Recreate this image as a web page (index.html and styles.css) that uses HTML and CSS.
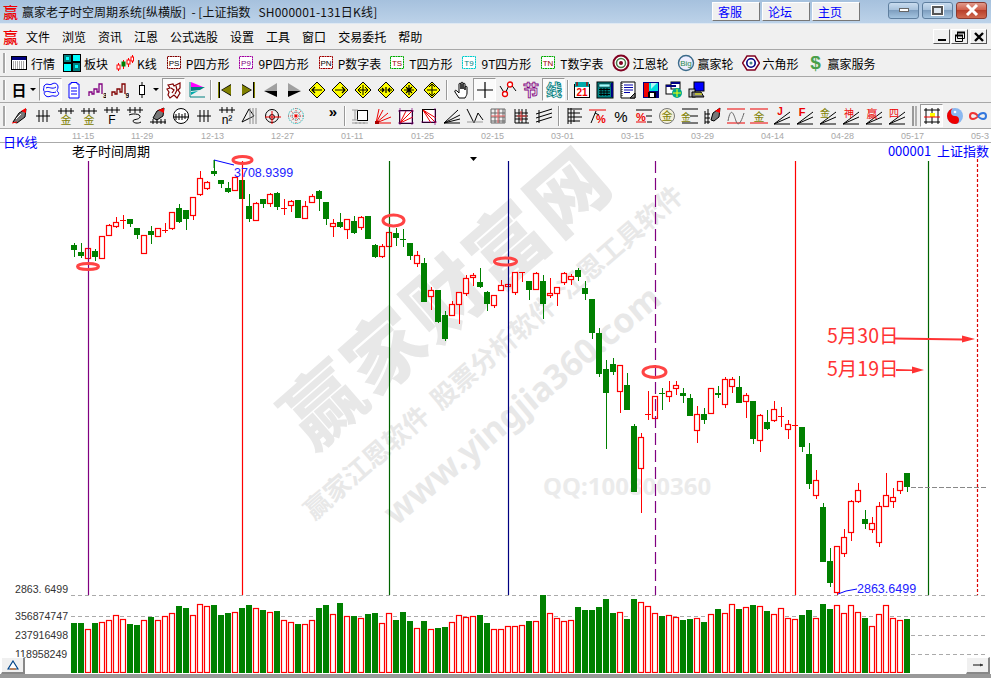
FILE: index.html
```html
<!DOCTYPE html>
<html lang="zh">
<head>
<meta charset="utf-8">
<title>赢家老子时空周期系统</title>
<link rel="stylesheet" href="styles.css">
</head>
<body>
<svg class="defs" aria-hidden="true">
  <symbol id="hq" viewBox="0 0 18 18"><rect x="1.5" y="2.5" width="15" height="13" fill="#fff" stroke="#000"/><rect x="2" y="3" width="14" height="3" fill="#000080"/><path d="M3 8h12M3 10h12M3 12h12M3 14h12" stroke="#555" stroke-dasharray="1 1"/></symbol>
  <symbol id="bk" viewBox="0 0 18 18"><rect x="0.5" y="0.5" width="8" height="8" fill="#008080" stroke="#000"/><rect x="9.5" y="0.5" width="8" height="7" fill="#0ff" stroke="#000"/><rect x="0.5" y="9.5" width="8" height="8" fill="#0ff" stroke="#000"/><rect x="9.5" y="8.5" width="8" height="9" fill="#008080" stroke="#000"/><path d="M3 3h3v3H3zM12 11h3v3h-3z" fill="#0ff"/></symbol>
  <symbol id="kx" viewBox="0 0 18 18"><path d="M2.5 9v8M7.5 6v9M12.5 4v9M16.5 1v8" stroke="#f00"/><rect x="1" y="11" width="3" height="4" fill="#fff" stroke="#f00"/><rect x="6" y="8" width="3" height="4" fill="#008000" stroke="#008000"/><rect x="11" y="6" width="3" height="4" fill="#fff" stroke="#f00"/><rect x="15" y="3" width="2.5" height="4" fill="#fff" stroke="#f00"/></symbol>
  <symbol id="jl" viewBox="0 0 18 18"><circle cx="9" cy="9" r="7.5" fill="#fff" stroke="#800020" stroke-width="2"/><circle cx="9" cy="9" r="4.5" fill="none" stroke="#4a7a4a" stroke-width="1.5"/><circle cx="9" cy="9" r="2" fill="#800020"/></symbol>
  <symbol id="yj" viewBox="0 0 18 18"><circle cx="9" cy="9" r="7.5" fill="#eef" stroke="#3a6a8a" stroke-width="1.4"/><text class="it" x="9" y="12" font-size="8" text-anchor="middle" fill="#2a8a4a">Big</text></symbol>
  <symbol id="hex" viewBox="0 0 18 18"><path d="M5 2h8l4.5 7-4.5 7H5L.5 9z" fill="#fff" stroke="#800020" stroke-width="1.5"/><circle cx="9" cy="9" r="4.2" fill="none" stroke="#000080" stroke-width="1.6"/><circle cx="9" cy="9" r="1.5" fill="#4a8a8a"/></symbol>
  <symbol id="wave" viewBox="0 0 18 18"><path d="M2 5C5 1 7 5 10 3s6 0 6 3-2 3 0 5-1 5-4 4-5 2-8 0-1-4-2-5 0-3 0-5zM4 7c3-2 6 2 10-1M3 11c4-2 6 2 11 0" fill="none" stroke="#00f"/></symbol>
  <symbol id="clip" viewBox="0 0 18 18"><path d="M4 3h2V1.5h6V3h2v14H4zM6 7h6M6 10h6M6 13h6" fill="#fff" stroke="#00f"/></symbol>
  <symbol id="st3" viewBox="0 0 18 18"><path d="M1 15v-4h3v2h2V8h3v3h2V3h3v10" fill="none" stroke="#800080" stroke-width="1.3"/><text class="it" x="15" y="17" font-size="7" fill="#000" font-weight="700">3</text></symbol>
  <symbol id="st9" viewBox="0 0 18 18"><path d="M1 15v-4h3v2h2V8h3v3h2V3h3v10" fill="none" stroke="#800000" stroke-width="1.3"/><text class="it" x="14.5" y="17" font-size="7" fill="#000" font-weight="700">9</text></symbol>
  <symbol id="can" viewBox="0 0 18 18"><path d="M9 1v16" stroke="#000"/><rect x="6.5" y="4.5" width="5" height="9" fill="#fff" stroke="#000"/></symbol>
  <symbol id="mz" viewBox="0 0 18 18"><path d="M3 4l5-1 1 2 6-3v5l-2 2 2 3-3 5-3-3-4 3-2-3 1-3-2-3 3-1zM6 7l3 2-2 3M11 5l1 4-2 4" fill="none" stroke="#800000" stroke-width="1.2"/></symbol>
  <symbol id="flag" viewBox="0 0 18 18"><path d="M2 1v15h15" fill="none" stroke="#008080"/><path d="M3 1v6l12-1z" fill="#f0f"/><path d="M3 6h14l-5 3-9 1z" fill="#008080"/><path d="M3 11l7-1-7 4z" fill="#0aa"/></symbol>
  <symbol id="first" viewBox="0 0 18 18"><path d="M2 1v16h2V1zM15 3v12L5 9z" fill="#000"/><path d="M15 4v10L6 9z" fill="#808000"/><path d="M2.5 1v16" stroke="#808000"/></symbol>
  <symbol id="last" viewBox="0 0 18 18"><path d="M14 1v16h2V1zM3 3v12l10-6z" fill="#000"/><path d="M3 4v10l9-5z" fill="#808000"/><path d="M15.5 1v16" stroke="#808000"/></symbol>
  <symbol id="lt" viewBox="0 0 18 18"><path d="M15 2L2 10h13z" fill="#a0a0a0"/><path d="M2 10l13 6V10z" fill="#000"/></symbol>
  <symbol id="rt" viewBox="0 0 18 18"><path d="M3 2l13 8H3z" fill="#a0a0a0"/><path d="M16 10L3 16V10z" fill="#000"/></symbol>
  <symbol id="dl" viewBox="0 0 18 18"><path d="M9 1l8 8-8 8-8-8z" fill="#ff0" stroke="#000"/><path d="M4 9h10M7 6L4 9l3 3" fill="none" stroke="#000" stroke-width="1.2"/></symbol>
  <symbol id="dr" viewBox="0 0 18 18"><path d="M9 1l8 8-8 8-8-8z" fill="#ff0" stroke="#000"/><path d="M4 9h10M11 6l3 3-3 3" fill="none" stroke="#000" stroke-width="1.2"/></symbol>
  <symbol id="dh" viewBox="0 0 18 18"><path d="M9 1l8 8-8 8-8-8z" fill="#ff0" stroke="#000"/><path d="M4 9h10M7 6L4 9l3 3M11 6l3 3-3 3M9 4v10" fill="none" stroke="#000"/></symbol>
  <symbol id="dx" viewBox="0 0 18 18"><path d="M9 1l8 8-8 8-8-8z" fill="#ff0" stroke="#000"/><path d="M3 9h4M15 9h-4M5 7l2 2-2 2M13 7l-2 2 2 2M9 6v6" fill="none" stroke="#000" stroke-width="1.2"/></symbol>
  <symbol id="da" viewBox="0 0 18 18"><path d="M9 1l8 8-8 8-8-8z" fill="#ff0" stroke="#000"/><path d="M4 9h10M9 4v10M6 6l6 6M12 6l-6 6" fill="none" stroke="#000" stroke-width="1.2"/></symbol>
  <symbol id="dv" viewBox="0 0 18 18"><path d="M9 1l8 8-8 8-8-8z" fill="#ff0" stroke="#000"/><path d="M9 3v12M6 6l3-3 3 3M6 12l3 3 3-3M4 9h10" fill="none" stroke="#000"/></symbol>
  <symbol id="hand" viewBox="0 0 18 18"><path d="M6 17l-4-6c-1-2 1-2 2-1l2 2V3c0-1 2-1 2 0v5V2c0-1 2-1 2 0v6V3c0-1 2-1 2 0v6V6c0-1 2-1 2 0v6c0 2-1 3-2 5z" fill="#fff" stroke="#000"/></symbol>
  <symbol id="cross" viewBox="0 0 18 18"><path d="M9 1v16M1 9h16" stroke="#000" stroke-width="1.2"/></symbol>
  <symbol id="zig" viewBox="0 0 18 18"><path d="M1 5l5 8 5-11 6 8" fill="none" stroke="#000"/><circle cx="6" cy="13" r="2.5" fill="#fff" stroke="#e00" stroke-width="1.3"/><circle cx="11" cy="3.5" r="2.5" fill="#fff" stroke="#e00" stroke-width="1.3"/></symbol>
  <symbol id="jie" viewBox="0 0 18 18"><text class="it" x="9" y="15" font-size="16" font-weight="700" text-anchor="middle" fill="none" stroke="#800080" stroke-width=".8">节</text></symbol>
  <symbol id="xian" viewBox="0 0 18 18"><text class="it" x="9" y="15" font-size="16" font-weight="700" text-anchor="middle" fill="none" stroke="#008080" stroke-width=".8">线</text></symbol>
  <symbol id="cal" viewBox="0 0 18 18"><rect x="1.5" y="3.5" width="15" height="13" fill="#fff" stroke="#000"/><path d="M2 1h14v5H2z" fill="#0aa"/><path d="M4 1v4M14 1v4" stroke="#a00" stroke-width="1.4"/><text class="it" x="9" y="15" font-size="10" font-weight="700" text-anchor="middle" fill="#e00">21</text></symbol>
  <symbol id="calc" viewBox="0 0 18 18"><rect x="1" y="1" width="16" height="16" fill="#008080" stroke="#000"/><rect x="3" y="3" width="11" height="3" fill="#9ff" stroke="#000" stroke-width=".5"/><path d="M3 8.5h11M3 11h11M3 13.5h11M5 7v8M8 7v8M11 7v8" stroke="#000"/><path d="M16 2v14" stroke="#000080" stroke-width="2"/></symbol>
  <symbol id="note" viewBox="0 0 18 18"><path d="M2 1h14v16H2z" fill="#fff" stroke="#000"/><path d="M5 4h9M5 6.5h9M5 9h9M5 11.5h6" stroke="#00a"/><path d="M11 17l5-5v5z" fill="#888" stroke="#000"/><path d="M3 2v14" stroke="#000" stroke-dasharray="1 1"/></symbol>
  <symbol id="disk" viewBox="0 0 18 18"><rect x="1" y="1" width="16" height="16" fill="#000080"/><rect x="2" y="2" width="5" height="14" fill="#e00"/><rect x="7" y="2" width="9" height="8" fill="#0dd"/><path d="M9 2h6l-6 6z" fill="#fff" opacity=".7"/><rect x="6" y="11" width="8" height="6" fill="#000"/><rect x="8" y="12" width="4" height="4" fill="#fff"/></symbol>
  <symbol id="win" viewBox="0 0 18 18"><rect x="1" y="4" width="10" height="9" fill="#fff" stroke="#000"/><rect x="6" y="1" width="9" height="7" fill="#fff" stroke="#000"/><rect x="6" y="1" width="9" height="2" fill="#000080"/><rect x="1" y="4" width="10" height="2" fill="#000080"/><circle cx="12" cy="12" r="5" fill="#0a8"/><path d="M8 12h8M12 8v8" stroke="#ff0"/></symbol>
  <symbol id="pc" viewBox="0 0 18 18"><rect x="6" y="1" width="10" height="9" fill="#00f" stroke="#000"/><rect x="1" y="8" width="6" height="8" fill="#ccc" stroke="#000"/><path d="M4 11h9l3 5H4z" fill="#777" stroke="#000"/><path d="M7 13h7" stroke="#ff0"/></symbol>
  <symbol id="pen" viewBox="0 0 18 18"><path d="M2 15L8 6l7-4-1 8-8 6z" fill="#777" stroke="#000"/><path d="M10 4l5-3v5z" fill="#f00"/><path d="M1 16l5-1" stroke="#f00"/><path d="M5 12L10 7" stroke="#fff"/></symbol>
  <symbol id="tal" viewBox="0 0 18 18"><path d="M2 9h14M5 3v12M9 3v12M13 3v12" stroke="#000"/></symbol>
  <symbol id="tj" viewBox="0 0 18 18"><path d="M1 4h16M4 1v6M9 1v6M14 1v6" stroke="#000"/><text class="it" x="9" y="17" font-size="11" text-anchor="middle" fill="#808000">金</text></symbol>
  <symbol id="tf" viewBox="0 0 18 18"><path d="M1 3h16M4 0v6M9 0v6M14 0v6" stroke="#000"/><text class="it" x="9" y="17" font-size="12" text-anchor="middle" fill="#000">F</text></symbol>
  <symbol id="ts" viewBox="0 0 18 18"><path d="M1 3h16M4 0v6M9 0v6M14 0v6" stroke="#000"/><path d="M3 8c4-2 12-1 11 2s-7 2-7 4 5 3 8 1" fill="none" stroke="#000"/></symbol>
  <symbol id="pn2" viewBox="0 0 18 18"><path d="M4 11l4-7 7-3-1 8-6 4z" fill="#777" stroke="#000"/><path d="M9 3l6-2v5z" fill="#f00"/><path d="M1 15h16M4 12v5M8 12v5M12 12v5M16 12v5" stroke="#000"/></symbol>
  <symbol id="cir" viewBox="0 0 18 18"><circle cx="9" cy="9" r="7.5" fill="#fff" stroke="#000"/><path d="M1 10h16M4 7v6M7 6v7M10 7v6M13 6v6" stroke="#000"/></symbol>
  <symbol id="tn" viewBox="0 0 18 18"><path d="M1 3h16M4 0v6M9 0v6M14 0v6" stroke="#000"/><text class="it" x="9" y="17" font-size="12" text-anchor="middle" fill="#000">n²</text></symbol>
  <symbol id="gt" viewBox="0 0 18 18"><path d="M1 15L8 2l5 7z" fill="none" stroke="#000"/><path d="M9 1v16M12 1v16M15 1v16" stroke="#888"/></symbol>
  <symbol id="tgt" viewBox="0 0 18 18"><circle cx="8" cy="9" r="6.5" fill="none" stroke="#000"/><circle cx="8" cy="10" r="2.5" fill="none" stroke="#000"/><path d="M1 10h16M8 4v13" stroke="#e00"/></symbol>
  <symbol id="rad" viewBox="0 0 18 18"><circle cx="9" cy="9" r="7.5" fill="none" stroke="#0aa" stroke-dasharray="1 1"/><circle cx="9" cy="9" r="4" fill="none" stroke="#088" stroke-dasharray="1 1"/><path d="M1 9h16M9 1v16M4 4l10 10M14 4L4 14" stroke="#e44" stroke-dasharray="1 1"/><circle cx="9" cy="9" r="1.5" fill="#e00"/></symbol>
  <symbol id="rb" viewBox="0 0 18 18"><rect x="6.5" y="3.5" width="10" height="10" fill="#fff" stroke="#000"/><path d="M1 3h6M1 13h6M4 3v10M1 16h16M5 15v2M9 15v2M13 15v2" stroke="#999"/></symbol>
  <symbol id="fr" viewBox="0 0 18 18"><path d="M2 16L5 2M2 16L9 3M2 16L14 6M2 16L17 10M2 16h15" stroke="#e00"/><path d="M1 14h4v3H1z" fill="#a00"/></symbol>
  <symbol id="bf1" viewBox="0 0 18 18"><rect x="2.5" y="3.5" width="13" height="13" fill="#fff" stroke="#000"/><path d="M3 16L16 3M3 16L9 4M3 16L16 10" stroke="#e00"/><path d="M3 1v17M1 16h16M15 1v17M1 4h16" stroke="#800080" stroke-width=".7"/></symbol>
  <symbol id="bf2" viewBox="0 0 18 18"><rect x="2.5" y="2.5" width="13" height="13" fill="#fff" stroke="#000"/><path d="M3 3l13 13M3 3l8 13M3 3l13 8" stroke="#e00"/><path d="M1 15h16M15 1v17" stroke="#800080" stroke-width=".7"/></symbol>
  <symbol id="fb" viewBox="0 0 18 18"><path d="M1 16L15 3M1 16L17 8M1 16l16-4M1 16h16" stroke="#000"/></symbol>
  <symbol id="vv" viewBox="0 0 18 18"><path d="M1 2l7 14 4-10 5 7" fill="none" stroke="#000"/><path d="M1 15h16" stroke="#999"/></symbol>
  <symbol id="grd" viewBox="0 0 18 18"><path d="M2 2h14v14H2zM2 6h14M2 10h14M2 14h14M6 2v14M10 2v14M14 2v14" fill="none" stroke="#666"/><path d="M2 9h14M9 2v14" stroke="#e66"/></symbol>
  <symbol id="grb" viewBox="0 0 18 18"><path d="M3 2v14h14M3 6h13M3 9h13M3 12h13M7 2v14M10 2v14M14 2v14" fill="none" stroke="#000"/><path d="M5 9h10M9 4v10" stroke="#e44"/></symbol>
  <symbol id="par" viewBox="0 0 18 18"><path d="M1 7l16-5M1 11l16-5M1 15l16-5M4 3v13" stroke="#000"/></symbol>
  <symbol id="tb1" viewBox="0 0 18 18"><path d="M2 1v16M2 2h14M2 6h12M2 10h14M2 14h12M5 1v16M8 3v12" stroke="#000"/></symbol>
  <symbol id="pc1" viewBox="0 0 18 18"><path d="M0 3h17" stroke="#e00"/><path d="M2 16L7 4M6 6l4 2" stroke="#000"/><text class="it" x="12" y="16" font-size="11" font-weight="700" text-anchor="middle" fill="#e00">%</text></symbol>
  <symbol id="pc2" viewBox="0 0 18 18"><text class="it" x="9" y="15" font-size="15" text-anchor="middle" fill="#000">%</text></symbol>
  <symbol id="pc3" viewBox="0 0 18 18"><path d="M1 3h16M11 9h6M12 15h5" stroke="#000"/><path d="M1 15h10" stroke="#e00"/><text class="it" x="6" y="14" font-size="11" font-weight="700" text-anchor="middle" fill="#e00">%</text></symbol>
  <symbol id="cg" viewBox="0 0 18 18"><circle cx="9" cy="9" r="7.5" fill="#f4f0d8" stroke="#777"/><text class="it" x="9" y="13" font-size="11" text-anchor="middle" fill="#808000">金</text></symbol>
  <symbol id="lg" viewBox="0 0 18 18"><path d="M1 2h16M9 9h8M1 16h16" stroke="#000"/><text class="it" x="5" y="14" font-size="10" text-anchor="middle" fill="#808000">金</text></symbol>
  <symbol id="pn3" viewBox="0 0 18 18"><path d="M7 13l2-7 7-5-1 9-5 4z" fill="#777" stroke="#000"/><path d="M11 4l5-3v5z" fill="#f00"/><path d="M1 4v13M4 2v15M1 7h5M1 11h5M1 15h5" stroke="#000"/></symbol>
  <symbol id="sin" viewBox="0 0 18 18"><path d="M0 2h18M0 16h18" stroke="#e00"/><path d="M1 14c3-16 6-6 8 0s5 2 8-8" fill="none" stroke="#666"/></symbol>
  <symbol id="lgr" viewBox="0 0 18 18"><path d="M0 2h18M0 16h18" stroke="#e00"/><text class="it" x="9" y="14" font-size="11" text-anchor="middle" fill="#808000">金</text></symbol>
  <symbol id="fj" viewBox="0 0 18 18"><path d="M1 17L17 5M1 17l16-7M1 17h16" stroke="#000"/><text class="it" x="7" y="8" font-size="10" font-weight="700" text-anchor="middle" fill="#e00">J</text></symbol>
  <symbol id="ff" viewBox="0 0 18 18"><path d="M1 17L17 5M1 17l16-7M1 17h16" stroke="#000"/><text class="it" x="6" y="9" font-size="11" font-weight="700" text-anchor="middle" fill="#e00">F</text></symbol>
  <symbol id="fg" viewBox="0 0 18 18"><path d="M1 17L17 5M1 17l16-7M1 17h16" stroke="#000"/><text class="it" x="6" y="10" font-size="10" text-anchor="middle" fill="#808000">金</text></symbol>
  <symbol id="fs" viewBox="0 0 18 18"><path d="M1 17L17 5M1 17l16-7M1 17h16" stroke="#000"/><text class="it" x="7" y="10" font-size="10" text-anchor="middle" fill="#e00">神</text></symbol>
  <symbol id="fy" viewBox="0 0 18 18"><path d="M1 17L17 5M1 17l16-7M1 17h16" stroke="#000"/><text class="it" x="7" y="11" font-size="11" text-anchor="middle" fill="#e00">赢</text></symbol>
  <symbol id="f4" viewBox="0 0 18 18"><path d="M1 17L17 5M1 17l16-7M1 17h16" stroke="#000"/><text class="it" x="6" y="10" font-size="10" text-anchor="middle" fill="#e00">四</text></symbol>
  <symbol id="gy" viewBox="0 0 18 18"><path d="M3 1v16M9 1v16M15 1v16M1 3h16M1 15h16" stroke="#000"/><rect x="7" y="6" width="5" height="4" fill="#ff0"/><path d="M1 10h16" stroke="#e00"/></symbol>
  <symbol id="yy" viewBox="0 0 18 18"><circle cx="9" cy="9" r="8" fill="#8ab8f0"/><path d="M9 1a8 8 0 0 0 0 16 4 4 0 0 0 0-8 4 4 0 0 1 0-8z" fill="#e00"/><circle cx="9" cy="5" r="1.3" fill="#fff"/><circle cx="9" cy="13" r="1.3" fill="#e00"/></symbol>
  <symbol id="inf" viewBox="0 0 18 18"><path d="M9 9C6 5 1 5 1 9s5 4 8 0" fill="none" stroke="#e33" stroke-width="2"/><path d="M9 9c3-4 8-4 8 0s-5 4-8 0" fill="none" stroke="#37d" stroke-width="2"/></symbol>
</svg>

<header class="titlebar">
  <span class="logo">赢</span>
  <span class="title">赢家老子时空周期系统[纵横版]  - [上证指数   <span class="tt">SH000001-131日K线]</span></span>
  <nav class="linkbtns">
    <a class="linkbtn">客服</a>
    <a class="linkbtn">论坛</a>
    <a class="linkbtn">主页</a>
  </nav>
  <div class="winbtns">
    <span class="winbtn"><i class="g-min"></i></span>
    <span class="winbtn"><i class="g-max"></i></span>
    <span class="winbtn close"><svg class="g-x" viewBox="0 0 14 12"><path d="M2 1l10 10M12 1L2 11" stroke="#fff" stroke-width="3"/></svg></span>
  </div>
</header>

<div class="menubar">
  <span class="logo small">赢</span>
  <span>文件</span><span>浏览</span><span>资讯</span><span>江恩</span><span>公式选股</span><span>设置</span><span>工具</span><span>窗口</span><span>交易委托</span><span>帮助</span>
  <div class="mdibtns">
    <span class="mdibtn"><i class="m-min"></i></span>
    <span class="mdibtn"><svg class="m-ic" viewBox="0 0 12 12"><path d="M3.5 1.5h7v6h-7zM1.5 4.5h7v6h-7z" fill="#eee" stroke="#000"/><path d="M3 1.5h8M1 4.5h8" stroke="#000" stroke-width="2"/></svg></span>
    <span class="mdibtn"><svg class="m-ic" viewBox="0 0 12 12"><path d="M2 2l8 8M10 2l-8 8" stroke="#000" stroke-width="2.4"/></svg></span>
  </div>
</div>

<div class="toolbar t1">
  <i class="grip"></i>
  <span class="item"><svg class="ic"><use href="#hq"/></svg>行情</span>
  <span class="item"><svg class="ic"><use href="#bk"/></svg>板块</span>
  <span class="item"><svg class="ic"><use href="#kx"/></svg>K线</span>
  <span class="item"><svg class="ic" viewBox="0 0 18 18"><rect class="bx" x="2.5" y="2.5" width="13" height="12" fill="#fff" stroke="#800000" stroke-dasharray="2 .5"/><text class="it" x="9" y="12" font-size="8" text-anchor="middle" fill="#000">PS</text></svg>P四方形</span>
  <span class="item"><svg class="ic" viewBox="0 0 18 18"><rect x="2.5" y="2.5" width="13" height="12" fill="#fff" stroke="#a000a0" stroke-dasharray="2 .5"/><text class="it" x="9" y="12" font-size="8" text-anchor="middle" fill="#800080">P9</text></svg>9P四方形</span>
  <span class="item"><svg class="ic" viewBox="0 0 18 18"><rect x="2.5" y="2.5" width="13" height="12" fill="#fff" stroke="#a00000" stroke-dasharray="2 .5"/><text class="it" x="9" y="12" font-size="8" text-anchor="middle" fill="#000">PN</text></svg>P数字表</span>
  <span class="item tight"><svg class="ic" viewBox="0 0 18 18"><rect x="2.5" y="2.5" width="13" height="12" fill="#fff" stroke="#0a0" stroke-dasharray="2 .5"/><text class="it" x="9" y="12" font-size="8" text-anchor="middle" fill="#a00000">TS</text></svg>T四方形</span>
  <span class="item"><svg class="ic" viewBox="0 0 18 18"><rect x="2.5" y="2.5" width="13" height="12" fill="#fff" stroke="#0cc" stroke-dasharray="2 .5"/><text class="it" x="9" y="12" font-size="8" text-anchor="middle" fill="#008080">T9</text></svg>9T四方形</span>
  <span class="item"><svg class="ic" viewBox="0 0 18 18"><rect x="2.5" y="2.5" width="13" height="12" fill="#fff" stroke="#0a0" stroke-dasharray="2 .5"/><text class="it" x="9" y="12" font-size="8" text-anchor="middle" fill="#a00000">TN</text></svg>T数字表</span>
  <span class="item"><svg class="ic"><use href="#jl"/></svg>江恩轮</span>
  <span class="item"><svg class="ic"><use href="#yj"/></svg>赢家轮</span>
  <span class="item"><svg class="ic"><use href="#hex"/></svg>六角形</span>
  <span class="item"><span class="dollar">$</span>赢家服务</span>
</div>

<div class="toolbar slots">
  <i class="grip"></i>
  <span class="tb wide"><b class="rili">日</b><i class="caret"></i></span>
  <span class="tb on"><svg class="ic"><use href="#wave"/></svg></span>
  <span class="tb"><svg class="ic"><use href="#clip"/></svg></span>
  <span class="tb"><svg class="ic"><use href="#st3"/></svg></span>
  <span class="tb"><svg class="ic"><use href="#st9"/></svg></span>
  <span class="tb wide"><svg class="ic"><use href="#can"/></svg><i class="caret"></i></span>
  <span class="tb on"><svg class="ic"><use href="#mz"/></svg></span>
  <span class="tb"><svg class="ic"><use href="#flag"/></svg></span>
  <i class="sep s5"></i>
  <span class="tb"><svg class="ic"><use href="#first"/></svg></span>
  <span class="tb"><svg class="ic"><use href="#last"/></svg></span>
  <span class="tb"><svg class="ic"><use href="#lt"/></svg></span>
  <span class="tb"><svg class="ic"><use href="#rt"/></svg></span>
  <span class="tb"><svg class="ic"><use href="#dl"/></svg></span>
  <span class="tb"><svg class="ic"><use href="#dr"/></svg></span>
  <span class="tb"><svg class="ic"><use href="#dh"/></svg></span>
  <span class="tb"><svg class="ic"><use href="#dx"/></svg></span>
  <span class="tb"><svg class="ic"><use href="#da"/></svg></span>
  <span class="tb"><svg class="ic"><use href="#dv"/></svg></span>
  <i class="sep s7"></i>
  <span class="tb"><svg class="ic"><use href="#hand"/></svg></span>
  <span class="tb on"><svg class="ic"><use href="#cross"/></svg></span>
  <span class="tb"><svg class="ic"><use href="#zig"/></svg></span>
  <span class="tb"><svg class="ic"><use href="#jie"/></svg></span>
  <span class="tb on"><svg class="ic"><use href="#xian"/></svg></span>
  <i class="sep s5"></i>
  <span class="tb"><svg class="ic"><use href="#cal"/></svg></span>
  <span class="tb"><svg class="ic"><use href="#calc"/></svg></span>
  <span class="tb"><svg class="ic"><use href="#note"/></svg></span>
  <span class="tb"><svg class="ic"><use href="#disk"/></svg></span>
  <span class="tb"><svg class="ic"><use href="#win"/></svg></span>
  <span class="tb"><svg class="ic"><use href="#pc"/></svg></span>
</div>

<div class="toolbar slots">
  <i class="grip"></i>
  <span class="tb"><svg class="ic"><use href="#pen"/></svg></span>
  <span class="tb"><svg class="ic"><use href="#tal"/></svg></span>
  <span class="tb"><svg class="ic"><use href="#tj"/></svg></span>
  <span class="tb"><svg class="ic"><use href="#tj"/></svg></span>
  <span class="tb"><svg class="ic"><use href="#tf"/></svg></span>
  <span class="tb"><svg class="ic"><use href="#ts"/></svg></span>
  <span class="tb"><svg class="ic"><use href="#pn2"/></svg></span>
  <span class="tb"><svg class="ic"><use href="#cir"/></svg></span>
  <span class="tb"><svg class="ic"><use href="#tal"/></svg></span>
  <span class="tb"><svg class="ic"><use href="#tn"/></svg></span>
  <span class="tb"><svg class="ic"><use href="#gt"/></svg></span>
  <span class="tb"><svg class="ic"><use href="#tgt"/></svg></span>
  <span class="tb"><svg class="ic"><use href="#rad"/></svg></span>
  <span class="chev">»</span>
  <i class="sep s7"></i>
  <span class="tb"><svg class="ic"><use href="#rb"/></svg></span>
  <span class="tb"><svg class="ic"><use href="#fr"/></svg></span>
  <span class="tb"><svg class="ic"><use href="#bf1"/></svg></span>
  <span class="tb"><svg class="ic"><use href="#bf2"/></svg></span>
  <span class="tb"><svg class="ic"><use href="#fb"/></svg></span>
  <span class="tb"><svg class="ic"><use href="#vv"/></svg></span>
  <span class="tb"><svg class="ic"><use href="#grd"/></svg></span>
  <span class="tb"><svg class="ic"><use href="#grb"/></svg></span>
  <span class="tb"><svg class="ic"><use href="#par"/></svg></span>
  <i class="sep s8"></i>
  <span class="tb"><svg class="ic"><use href="#tb1"/></svg></span>
  <span class="tb"><svg class="ic"><use href="#pc1"/></svg></span>
  <span class="tb"><svg class="ic"><use href="#pc2"/></svg></span>
  <span class="tb"><svg class="ic"><use href="#pc3"/></svg></span>
  <span class="tb"><svg class="ic"><use href="#cg"/></svg></span>
  <span class="tb"><svg class="ic"><use href="#lg"/></svg></span>
  <span class="tb"><svg class="ic"><use href="#pn3"/></svg></span>
  <span class="tb"><svg class="ic"><use href="#sin"/></svg></span>
  <span class="tb"><svg class="ic"><use href="#lgr"/></svg></span>
  <span class="tb"><svg class="ic"><use href="#fj"/></svg></span>
  <span class="tb"><svg class="ic"><use href="#ff"/></svg></span>
  <span class="tb"><svg class="ic"><use href="#fg"/></svg></span>
  <span class="tb"><svg class="ic"><use href="#fs"/></svg></span>
  <span class="tb"><svg class="ic"><use href="#fy"/></svg></span>
  <span class="tb"><svg class="ic"><use href="#f4"/></svg></span>
  <i class="sep s35"></i>
  <span class="tb on"><svg class="ic"><use href="#gy"/></svg></span>
  <span class="tb"><svg class="ic"><use href="#yy"/></svg></span>
  <span class="tb"><svg class="ic"><use href="#inf"/></svg></span>
</div>

<main class="chartwrap">
  <svg class="chart" viewBox="0 130 991 544">
    <g class="wm">
      <text class="wm-big" transform="translate(447 299) rotate(-41)" text-anchor="middle" y="28">赢家财富网</text>
      <text class="wm-mid" transform="translate(493 353) rotate(-41)" text-anchor="middle" y="10" xml:space="preserve">赢家江恩软件 股票分析软件 江恩工具软件</text>
      <text class="wm-url" transform="translate(522 406) rotate(-40)" text-anchor="middle" y="12">www.yingjia360.com</text>
      <text class="wm-qq" x="543" y="496">QQ:100800360</text>
    </g>

    <g class="axis">
      <text x="72" y="140">11-15</text><text x="131" y="140">11-29</text><text x="201" y="140">12-13</text><text x="271" y="140">12-27</text><text x="341" y="140">01-11</text><text x="411" y="140">01-25</text><text x="481" y="140">02-15</text><text x="551" y="140">03-01</text><text x="621" y="140">03-15</text><text x="691" y="140">03-29</text><text x="761" y="140">04-14</text><text x="831" y="140">04-28</text><text x="901" y="140">05-17</text><text x="971" y="140">05-3</text>
    </g>
    <path class="topline" d="M0 143.5H991"/>

    <text class="daylabel" x="3" y="148">日K线</text>
    <text class="charttitle" x="72" y="157">老子时间周期</text>
    <text class="symbol" x="989" y="157" text-anchor="end" xml:space="preserve">000001  上证指数</text>
    <path class="marker" d="M470 158h7l-3.5 4z"/>

    <path class="grid" d="M71 596.5H988M71 617.5H988M71 636.5H988M71 655.5H988"/>
    <text class="scale" x="15" y="594">2863. 6499</text>
    <text class="scale" x="15" y="621">356874747</text>
    <text class="scale" x="15" y="640">237916498</text>
    <text class="scale" x="15" y="659">118958249</text>

    <g id="candles"></g>
    <g id="volume"></g>

    <path class="v purple" d="M88.5 162V596"/>
    <path class="v red" d="M242.5 162V596"/>
    <path class="v green" d="M389.5 162V596"/>
    <path class="v navy" d="M508.5 162V596"/>
    <path class="v purple dash" d="M655.5 162V596"/>
    <path class="v red" d="M795.5 162V596"/>
    <path class="v green" d="M928.5 162V596"/>
    <path class="v red dot" d="M977.5 160V596"/>
    <path class="last" d="M911 488.5H988"/>

    <path class="lead" d="M214 161l20 5"/>
    <path class="wick-g" d="M214 161v8"/>
    <text class="val" x="234" y="178">3708.9399</text>
    <path class="lead" d="M838 595l8-3 11-2"/>
    <text class="val" x="857" y="594">2863.6499</text>

    <ellipse class="oval" cx="88" cy="267.5" rx="10.5" ry="3"/>
    <ellipse class="oval" cx="242.5" cy="161" rx="9.5" ry="3.5"/>
    <ellipse class="oval" cx="393.5" cy="221.5" rx="10.5" ry="5.5"/>
    <ellipse class="oval" cx="505.5" cy="262.5" rx="11" ry="3.5"/>
    <ellipse class="oval" cx="654.5" cy="373" rx="11.5" ry="5.5"/>

    <text class="note" x="827" y="344">5月30日</text>
    <path class="arrow" d="M895 338.5L962 339.5V336.5L975 340L962 343.5V341.5L895 340.5Z"/>
    <text class="note" x="827" y="377">5月19日</text>
    <path class="arrow" d="M896 370L912 370.5V367.5L924 371L912 374.5V372L896 372Z"/>
  </svg>
  <span class="scroll left"><svg class="sc" viewBox="0 0 12 10"><path d="M6 1l5 8H1z" fill="#fff" stroke="#048" stroke-width="1.2"/><path d="M3 9h6" stroke="#e60"/></svg></span>
  <span class="scroll right"><svg class="sc" viewBox="0 0 12 10"><path d="M1 5h10" stroke="#333" stroke-width="1.2"/><path d="M8 3.5l3 1.5-3 1.5" fill="#333"/></svg></span>
</main>
<div class="statusline"></div>
<script src="chart.js"></script>
</body>
</html>
```
FILE: styles.css
```css
* { box-sizing: border-box; }
html, body { margin: 0; padding: 0; }
body {
  width: 991px;
  height: 678px;
  overflow: hidden;
  background: #f0f0f0;
  font-family: "Noto Sans CJK SC", "Noto Sans", sans-serif;
  font-size: 12px;
  color: #000;
  display: flex;
  flex-direction: column;
}
.defs { position: absolute; width: 0; height: 0; }
.it { font-family: "Liberation Sans", "Noto Sans CJK SC", sans-serif; }
svg text { white-space: pre; }

.titlebar {
  height: 24px;
  flex: none;
  display: flex;
  align-items: center;
  padding-left: 3px;
  background: linear-gradient(#a6c1dd, #bcd2e9);
  border-bottom: 1px solid #dfe9f3;
}
.logo { color: #e00; font-size: 15px; font-weight: 500; line-height: 1; width: 19px; }
.title { color: #111; white-space: pre; flex: 1; }
.tt { letter-spacing: .2px; }
.linkbtns { display: flex; gap: 2px; margin-right: 28px; }
.linkbtn {
  width: 48px;
  height: 19px;
  padding-left: 5px;
  line-height: 17px;
  color: #00f;
  background: #f0f0f0;
  border: 1px solid;
  border-color: #fff #777 #777 #fff;
}
.winbtns { display: flex; gap: 3px; margin-right: 4px; margin-bottom: 3px; }
.winbtn {
  width: 31px;
  height: 17px;
  display: flex;
  align-items: center;
  justify-content: center;
  border: 1px solid #5f7f9f;
  border-radius: 3px;
  background: linear-gradient(#c9dcef 0, #a8c2dc 45%, #7f9fc0 50%, #a4c4e0 100%);
}
.winbtn.close { border-color: #8a3a30; background: linear-gradient(#e09a8c 0, #d0604c 45%, #b8402c 50%, #d06a50 100%); }
.g-min { width: 10px; height: 4px; background: #fff; border: 1px solid #666; }
.g-max { width: 11px; height: 9px; border: 2px solid #555; background: #e0e8f0; outline: 1px solid #fff; }
.g-x { width: 14px; height: 12px; }

.menubar {
  height: 26px;
  flex: none;
  display: flex;
  align-items: center;
  gap: 12px;
  padding-left: 3px;
  border-bottom: 1px solid #a8a8a8;
}
.logo.small { width: 11px; }
.mdibtns { display: flex; gap: 1px; margin-left: auto; margin-right: 4px; }
.mdibtn {
  width: 17px;
  height: 15px;
  display: flex;
  align-items: center;
  justify-content: center;
  background: #f0f0f0;
  border: 1px solid;
  border-color: #fff #555 #555 #fff;
}
.mdibtn:last-child { margin-left: 1px; }
.m-min { width: 8px; height: 2px; background: #000; margin-top: 7px; }
.m-ic { width: 12px; height: 12px; }

.toolbar {
  flex: none;
  display: flex;
  align-items: center;
  padding-left: 3px;
  border-bottom: 1px solid #a8a8a8;
  height: 26px;
}
.t1 { height: 27px; gap: 8px; }
.slots:last-of-type { height: 27px; }
.grip {
  width: 3px;
  height: 20px;
  border-left: 2px solid #a8a8a8;
  border-right: 1px solid #fff;
  margin-right: 2px;
  flex: none;
}
.t1 .grip { margin-right: -4px; }
.ic { width: 18px; height: 18px; flex: none; display: block; }
.item { display: flex; align-items: center; gap: 3px; white-space: nowrap; }
.item.tight { margin-left: -1px; }
.dollar { width: 18px; text-align: center; color: #4aa04a; font: 700 19px "Liberation Sans", sans-serif; }
.tb {
  width: 23px;
  height: 23px;
  display: flex;
  align-items: center;
  justify-content: center;
  flex: none;
}
.tb.wide { width: 31px; justify-content: flex-start; padding-left: 2px; gap: 2px; }
.tb.on {
  background: #fbfbfb;
  border: 1px solid;
  border-color: #999 #fff #fff #999;
}
.rili { font-size: 15px; font-weight: 700; width: 18px; text-align: center; line-height: 1; }
.caret { width: 0; height: 0; border: 3px solid transparent; border-top: 3px solid #000; border-bottom: 0; }
.sep { flex: none; height: 20px; border-left: 1px solid #999; border-right: 1px solid #fff; }
.s5 { width: 2px; margin: 0 1px 0 2px; }
.s7 { width: 2px; margin: 0 2px 0 3px; }
.s8 { width: 2px; margin: 0 3px; }
.s35 { width: 5px; margin: 0 3px 0 4px; border-left-width: 2px; border-right-width: 2px; border-right-color: #b0b0b0; }
.chev { flex: none; width: 34px; text-align: right; padding-right: 4px; font: 700 15px "Liberation Sans", sans-serif; line-height: 16px; margin-bottom: 8px; }

.chartwrap { position: relative; flex: 1; background: #fff; min-height: 0; }
.chart { display: block; width: 991px; height: 544px; }
.scroll {
  position: absolute;
  bottom: 0;
  width: 24px;
  height: 17px;
  display: flex;
  align-items: center;
  justify-content: center;
  background: #f0f0f0;
  border-style: solid;
  border-width: 1px 2px 2px 1px;
  border-color: #fff #888 #888 #fff;
}
.scroll.left { left: 1px; }
.scroll.right { right: 1px; }
.sc { width: 12px; height: 10px; }
.statusline { height: 4px; flex: none; background: #999; }

.wm text { fill: #e8e8e8; }
.wm-big { font-size: 78px; font-weight: 900; letter-spacing: 3px; }
.wm-mid { font-size: 26px; font-weight: 700; word-spacing: 6px; }
.wm-url { font: 700 34px "Noto Sans", sans-serif; }
.wm text.wm-qq { font: 700 24px "Noto Sans", sans-serif; fill: #ebebeb; }
.axis text { font: 9px "Liberation Sans", sans-serif; fill: #a8a8a8; }
.topline { stroke: #aaa; fill: none; }
.daylabel { fill: #00f; font-size: 13px; }
.charttitle { fill: #000; font-size: 13px; }
.symbol { fill: #00f; font-size: 13px; }
.marker { fill: #000; }
.grid { stroke: #aaa; stroke-dasharray: 4 3; fill: none; }
.scale { font: 10.6px "Liberation Sans", sans-serif; fill: #333; }
.v { fill: none; stroke-width: 1.2; }
.purple { stroke: #800080; }
.red { stroke: #f00; }
.green { stroke: #006400; }
.navy { stroke: #000080; }
.dash { stroke-dasharray: 12 5; }
.dot { stroke-dasharray: 3 2; stroke: #d00; }
.last { stroke: #888; stroke-dasharray: 5 2; fill: none; }
.lead { stroke: #00f; fill: none; }
.wick-g { stroke: #008000; fill: none; }
.val { font: 12.5px "Liberation Sans", sans-serif; fill: #22f; }
.oval { fill: none; stroke: #f44; stroke-width: 3; }
.note { font-size: 19.5px; fill: #f33; }
.arrow { fill: #f33; }
.up-b { fill: #fff; stroke: #f00; stroke-width: 1.2; }
.up-w { fill: #f00; }
.dn { fill: #008000; }
```
FILE: chart.js
```js
// Each candle: [colour, body top, body bottom, wick high, wick low], in zoomed
// pixels (3x) of the source chart with its own y-origin per segment.
const seg1 = [["g",288,302,282,323],["g",309,321,282,326],["r",298,326],["g",306,324,300,335],["r",262,326],["r",229,257,225,257],["r",220,230,205,236],["r",212,214,198,240],["g",210,225,210,234],["g",237,257,237,270],["r",259,311,257,314],["g",246,258,232,285],["r",238,260,237,264],["r",244,246,222,251],["r",190,236,188,243],["g",178,220,165,222],["g",183,210,183,243],["r",145,197,143,213],["r",88,136,66,141],["r",100,116,96,122],["g",66,75,34,81],["g",93,105,93,117],["g",117,129,99,132],["r",85,124,83,126],["g",93,150],["g",171,210,135,219],["r",163,212,160,212],["g",150,165,150,177],["r",136,161,133,174],["g",132,174,129,183],["r",177,179,150,198],["r",157,169,154,189],["g",153,207],["r",172,206,156,206],["r",142,160,136,160],["g",126,150,123,186],["g",159,210,159,228],["r",222,230,210,264],["g",219,234,192,237],["r",211,241,209,270],["g",216,252,201,255],["r",205,233,202,243],["g",201,270],["g",288,324,285,327],["r",292,320,285,327]];
const seg2 = [["r",100,140,98,140],["g",102,117,87,140],["g",120,122,90,144],["g",132,171,132,183],["r",169,191,156,203],["g",192,309,178,309],["r",274,292,265,333],["g",273,369,273,372],["g",348,420,336,426],["r",316,347,307,347],["r",280,314,280,375],["r",238,281,228,291],["r",228,233,222,261],["g",249,264,207,267],["g",279,315,276,336],["r",289,317,289,327],["r",259,272,243,275],["r",256,260],["r",220,278,220,288],["r",219,221,219,249],["g",246,273,246,303],["r",223,269,219,269],["g",246,315,228,360],["r",283,289,237,297],["r",265,281,265,321],["r",223,248,219,258],["r",232,239,225,258],["g",213,234,207,246],["g",267,285,246,303],["g",300,402,300,420],["g",402,525,387,534],["g",510,582,483,750],["g",495,519,477,528],["r",499,575,497,642],["g",558,633,522,633],["g",681,879,675,879],["r",715,808,702,942],["r",646,648,576,663],["r",592,656,590,672],["g",582,584,567,633],["r",577,590,546,609]];
const seg3 = [["r",199,208,186,228],["g",222,230,207,252],["g",237,291,225,291],["r",286,332,262,372],["g",285,303,267,315],["r",208,281,206,285],["g",222,228,201,237],["r",181,254,174,267],["r",181,200,174,222],["g",204,252,171,252],["r",229,245,222,297],["g",246,360,246,375],["r",289,362,285,399],["g",309,330,273,333],["r",271,302,246,309],["r",292,294,264,324],["r",316,329,303,360],["r",318,320],["g",324,384,324,399],["g",405,495,372,510],["r",484,527,453,540],["g",564,729,552,729],["g",726,792,687,804],["r",682,820,680,828],["r",655,701,630,714],["r",547,638,544,666],["r",514,547,492,552],["g",600,615,573,630],["r",613,631,594,642],["r",562,668,549,684],["r",529,562,462,562],["r",535,547,507,567],["r",487,512,485,525],["g",462,504,462,519]];
const volume = "g132 g132 r151 g132 r130 r124 r109 r121 g135 g138 r124 g114 r124 r112 r103 g81 g87 r109 r76 r82 g78 g108 g102 r100 g87 g78 r88 g93 r100 g96 r124 r130 g135 r136 r124 g87 g78 r106 g72 r112 g111 r118 g105 g102 r133 r103 g123 g99 g126 r148 g126 r151 g147 g144 r130 r109 r115 r112 g108 g132 r151 r151 r142 r142 r139 g126 r127 g48 r103 r118 r127 r124 g84 g93 g93 g84 g60 g102 r100 g120 g60 r70 r82 r103 g111 r109 r115 g123 g120 r118 g129 r106 g90 r103 r76 g90 r85 g78 r82 g96 r106 r88 r118 r121 g108 g93 r118 g75 g90 r79 r103 r79 r100 g117 r142 r106 r79 r118 r124 g120".split(" ");

function candleMarkup(c, i, base) {
  const x = 71 + 7 * i;
  const top = Math.round(base + c[1] / 3);
  const bot = Math.round(base + c[2] / 3);
  const hi = Math.round(base + (c[3] === undefined ? c[1] : c[3]) / 3);
  const lo = Math.round(base + (c[4] === undefined ? c[2] : c[4]) / 3);
  const h = Math.max(bot - top, 1);
  if (c[0] === "g") {
    return `<rect class="dn" x="${x + 3}" y="${hi}" width="1" height="${lo - hi}"/>` +
      `<rect class="dn" x="${x}" y="${top}" width="6" height="${h}"/>`;
  }
  const wick = `<rect class="up-w" x="${x + 3}" y="${hi}" width="1" height="${lo - hi}"/>`;
  if (h <= 1) {
    return wick + `<rect class="up-w" x="${x}" y="${top}" width="6" height="1"/>`;
  }
  return wick + `<rect class="up-b" x="${x + .5}" y="${top + .5}" width="5" height="${h}"/>`;
}

let html = "";
seg1.forEach((c, i) => { html += candleMarkup(c, i, 150); });
seg2.forEach((c, i) => { html += candleMarkup(c, i + seg1.length, 200); });
seg3.forEach((c, i) => { html += candleMarkup(c, i + seg1.length + seg2.length, 320); });
document.getElementById("candles").innerHTML = html;

document.getElementById("volume").innerHTML = volume.map((v, i) => {
  const x = 71 + 7 * i;
  const y = Math.round(580 + Number(v.slice(1)) / 3);
  return v[0] === "g"
    ? `<rect class="dn" x="${x}" y="${y}" width="6" height="${674 - y}"/>`
    : `<rect class="up-b" x="${x + .5}" y="${y + .5}" width="5" height="${673 - y}"/>`;
}).join("");
```
